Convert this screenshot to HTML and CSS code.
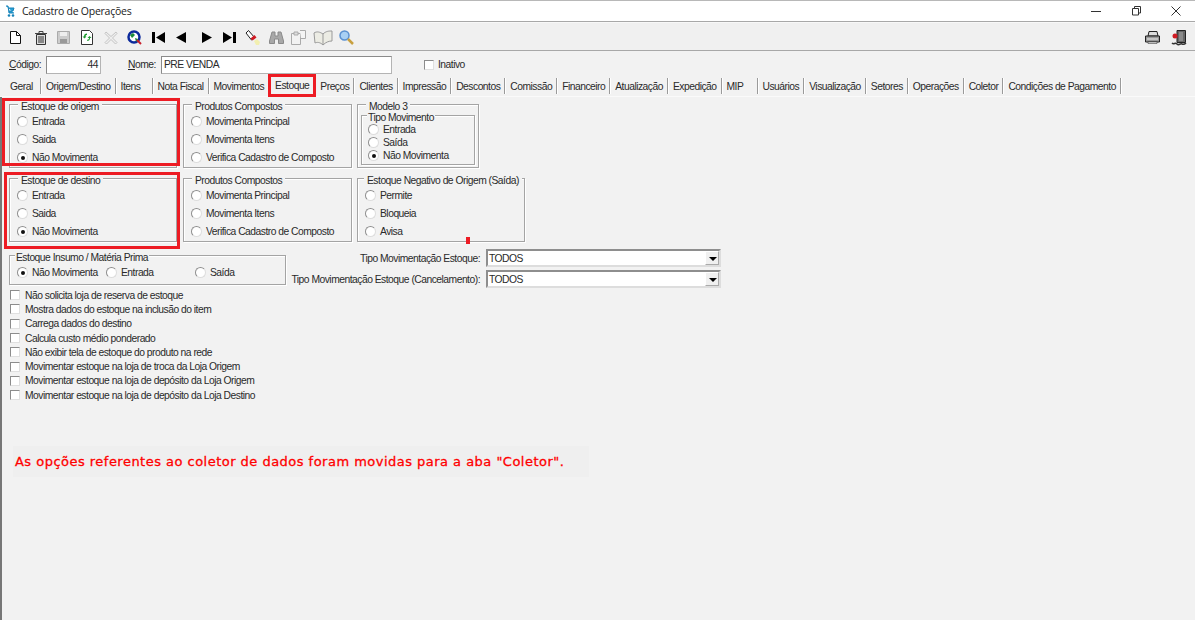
FILE: index.html
```html
<!DOCTYPE html>
<html lang="pt">
<head>
<meta charset="utf-8">
<title>Cadastro de Operações</title>
<link rel="stylesheet" href="styles.css">
</head>
<body>
<div class="window">
  <header class="titlebar">
    <svg class="app-icon" width="10" height="13" viewBox="0 0 10 13"><path d="M1 1h2l1 7h5M3 3h6l-1 3H4" fill="#29a3d8" stroke="#1682b8"/><circle cx="4" cy="10.500" r="1.300" fill="#1682b8"/><circle cx="8" cy="10.500" r="1.300" fill="#1682b8"/></svg>
    <span class="title-text">Cadastro de Operações</span>
    <div class="winctl">
      <svg width="12" height="12" viewBox="0 0 12 12"><path d="M1 6.500h10" stroke="#333"/></svg>
      <svg width="12" height="12" viewBox="0 0 12 12"><path d="M2.500 3.500h6v6.500h-6zM4.500 3.500v-2h6v6.500h-2" fill="none" stroke="#333"/></svg>
      <svg width="12" height="12" viewBox="0 0 12 12"><path d="M1.500 1.500l9 9M10.500 1.500l-9 9" stroke="#333"/></svg>
    </div>
  </header>

  <div class="toolbar">
    <svg class="ti i-new" width="11" height="13" viewBox="0 0 11 13"><path d="M.5.500h6l4 4v8H.500z" fill="#fff" stroke="#111"/><path d="M6.500.5v4h4" fill="none" stroke="#111"/></svg>
    <svg class="ti i-del" width="14" height="15" viewBox="0 0 14 15"><path d="M1 3.500h12M5 3V1.500h4V3" fill="none" stroke="#444"/><path d="M2.500 4.500h9v10h-9z" fill="#ddd" stroke="#333"/><path d="M5 6v7M7 6v7M9 6v7" stroke="#333"/></svg>
    <svg class="ti i-save" width="13" height="13" viewBox="0 0 13 13"><path d="M.5.500h12v12H.500z" fill="#ccc" stroke="#aaa"/><path d="M3 1h7v4H3z" fill="#eee"/><path d="M3 8h7v4H3z" fill="#999"/></svg>
    <svg class="ti i-ref" width="12" height="15" viewBox="0 0 12 15"><path d="M.5.500h8l3 3v11H.500z" fill="#fff" stroke="#333"/><path d="M6 3.500c-2 0-3 1-3 3l-1.500 0 2 2 2-2H4.500c0-1 .5-1.500 1.500-1.500zM6 11c2 0 3-1 3-3h1.500l-2-2-2 2H8c0 1-.5 1.500-1.500 1.500z" fill="#1a9a2c"/></svg>
    <svg class="ti i-x" width="14" height="14" viewBox="0 0 14 14"><path d="M2 1l5 4.500L12 1l1 1.500L8.500 7l4.500 4.500-1.500 1.500L7 8.500 2.500 13 1 11.500 5.500 7 1 2.500z" fill="#eee" stroke="#c4c4c4"/></svg>
    <svg class="ti i-globe" width="15" height="15" viewBox="0 0 15 15"><circle cx="7" cy="7" r="5.500" fill="#fff" stroke="#0c2a9c" stroke-width="2.500"/><path d="M3 5l3-2 2 2-3 3zM8 8l3 1-2 3z" fill="#1c8a3a"/><path d="M10 10l4 4" stroke="#c8202c" stroke-width="2"/></svg>
    <svg class="ti i-first" width="13" height="11" viewBox="0 0 13 11"><path d="M0 0h3v11H0zM13 0v11L4 5.500z" fill="#000"/></svg>
    <svg class="ti i-prev" width="10" height="11" viewBox="0 0 10 11"><path d="M10 0v11L0 5.500z" fill="#000"/></svg>
    <svg class="ti i-next" width="10" height="11" viewBox="0 0 10 11"><path d="M0 0v11l10-5.500z" fill="#000"/></svg>
    <svg class="ti i-last" width="13" height="11" viewBox="0 0 13 11"><path d="M0 0v11l9-5.500zM10 0h3v11h-3z" fill="#000"/></svg>
    <svg class="ti i-flash" width="16" height="16" viewBox="0 0 16 16"><path d="M1 3l2.500-2.500 6 7-3 2.500z" fill="#fff" stroke="#222"/><path d="M5.500 8.500l4-3.500 2 2.500-4 3z" fill="#d01c24"/><path d="M9 11l3-2 3 3-1 3-3 0z" fill="#f2efb0"/></svg>
    <svg class="ti i-bino" width="15" height="13" viewBox="0 0 15 13"><path d="M3 1h3v4h3V1h3l2.500 9v2.500H9.500V8H5.500v4.500H.500V10z" fill="#a8a8a8" stroke="#8a8a8a"/></svg>
    <svg class="ti i-copy" width="16" height="15" viewBox="0 0 16 15"><path d="M.5 3.500h9v11h-9z" fill="#f2f2f2" stroke="#aaa"/><path d="M9 .5h5.500v8H10" fill="#f4f4f4" stroke="#aaa"/><path d="M3 2h4v3H3z" fill="#ddd" stroke="#aaa"/></svg>
    <svg class="ti i-book" width="20" height="16" viewBox="0 0 20 16"><path d="M1 3c3-2 6-1 9 1 3-3 6-3 9-3v10c-3 0-6 1-9 4-3-3-6-3-8-2z" fill="#ecece4" stroke="#999"/><path d="M10 4v11" stroke="#999"/></svg>
    <svg class="ti i-find" width="15" height="15" viewBox="0 0 15 15"><circle cx="5.500" cy="5.500" r="4.500" fill="#a8d0f4" stroke="#5a90d0" stroke-width="1.500"/><path d="M9 9l5 5" stroke="#c8a040" stroke-width="2.500"/></svg>
    <svg class="ti i-print" width="15" height="13" viewBox="0 0 15 13"><path d="M4 .5h8l1 4.500H3z" fill="#ddd" stroke="#222"/><path d="M.5 5h14v6H.500z" fill="#999" stroke="#222"/><path d="M2 8h11" stroke="#eee"/><path d="M3 11h9v1.500H3z" fill="#eee" stroke="#222" stroke-width=".5"/></svg>
    <svg class="ti i-door" width="16" height="16" viewBox="0 0 16 16"><path d="M6 .5h8.500v12H6z" fill="#666" stroke="#222"/><path d="M8 2h4v9H8z" fill="#8a8a8a"/><circle cx="4" cy="6" r="2.500" fill="#d01c24"/><path d="M1 13c2 2 3-1 5 1s3-1 5 0 3 0 4-1" fill="none" stroke="#333" stroke-width="1.500"/></svg>
  </div>

  <div class="idrow">
    <span class="idlabel"><u>C</u>ódigo:</span>
    <span class="field code">44</span>
    <span class="idlabel name-label"><u>N</u>ome:</span>
    <span class="field name">PRE VENDA</span>
    <span class="check inativo"><i class="cb"></i>Inativo</span>
  </div>

  <nav class="tabs">
    <span class="tab t-geral">Geral</span>
    <span class="tab">Origem/Destino</span>
    <span class="tab t-itens">Itens</span>
    <span class="tab">Nota Fiscal</span>
    <span class="tab">Movimentos</span>
    <span class="tab active">Estoque</span>
    <span class="tab">Preços</span>
    <span class="tab">Clientes</span>
    <span class="tab">Impressão</span>
    <span class="tab">Descontos</span>
    <span class="tab">Comissão</span>
    <span class="tab">Financeiro</span>
    <span class="tab">Atualização</span>
    <span class="tab">Expedição</span>
    <span class="tab t-mip">MIP</span>
    <span class="tab">Usuários</span>
    <span class="tab">Visualização</span>
    <span class="tab">Setores</span>
    <span class="tab">Operações</span>
    <span class="tab">Coletor</span>
    <span class="tab">Condições de Pagamento</span>
  </nav>

  <main class="content">
    <div class="grouprow">
      <fieldset class="group g-stock">
        <legend>Estoque de origem</legend>
        <label class="radio"><i class="rd"></i>Entrada</label>
        <label class="radio"><i class="rd"></i>Saida</label>
        <label class="radio"><i class="rd on"></i>Não Movimenta</label>
      </fieldset>
      <fieldset class="group g-comp">
        <legend>Produtos Compostos</legend>
        <label class="radio"><i class="rd"></i>Movimenta Principal</label>
        <label class="radio"><i class="rd"></i>Movimenta Itens</label>
        <label class="radio"><i class="rd"></i>Verifica Cadastro de Composto</label>
      </fieldset>
      <fieldset class="group g-model">
        <legend>Modelo 3</legend>
        <fieldset class="group g-inner">
          <legend>Tipo Movimento</legend>
          <label class="radio tight"><i class="rd"></i>Entrada</label>
          <label class="radio tight"><i class="rd"></i>Saída</label>
          <label class="radio tight"><i class="rd on"></i>Não Movimenta</label>
        </fieldset>
      </fieldset>
    </div>

    <div class="grouprow second">
      <fieldset class="group g-stock">
        <legend>Estoque de destino</legend>
        <label class="radio"><i class="rd"></i>Entrada</label>
        <label class="radio"><i class="rd"></i>Saida</label>
        <label class="radio"><i class="rd on"></i>Não Movimenta</label>
      </fieldset>
      <fieldset class="group g-comp">
        <legend>Produtos Compostos</legend>
        <label class="radio"><i class="rd"></i>Movimenta Principal</label>
        <label class="radio"><i class="rd"></i>Movimenta Itens</label>
        <label class="radio"><i class="rd"></i>Verifica Cadastro de Composto</label>
      </fieldset>
      <fieldset class="group g-neg">
        <legend>Estoque Negativo de Origem (Saída)</legend>
        <label class="radio"><i class="rd"></i>Permite</label>
        <label class="radio"><i class="rd"></i>Bloqueia</label>
        <label class="radio"><i class="rd"></i>Avisa</label>
      </fieldset>
    </div>

    <div class="thirdrow">
      <fieldset class="group g-insumo">
        <legend>Estoque Insumo / Matéria Prima</legend>
        <label class="radio r1"><i class="rd on"></i>Não Movimenta</label>
        <label class="radio r2"><i class="rd"></i>Entrada</label>
        <label class="radio"><i class="rd"></i>Saída</label>
      </fieldset>
      <div class="selects">
        <div class="selrow"><span class="sellabel">Tipo Movimentação Estoque:</span><span class="combo">TODOS<i class="arrow"></i></span></div>
        <div class="selrow"><span class="sellabel">Tipo Movimentação Estoque (Cancelamento):</span><span class="combo">TODOS<i class="arrow"></i></span></div>
      </div>
    </div>

    <div class="checks">
      <span class="check"><i class="cb"></i>Não solicita loja de reserva de estoque</span>
      <span class="check"><i class="cb"></i>Mostra dados do estoque na inclusão do item</span>
      <span class="check"><i class="cb"></i>Carrega dados do destino</span>
      <span class="check"><i class="cb"></i>Calcula custo médio ponderado</span>
      <span class="check"><i class="cb"></i>Não exibir tela de estoque do produto na rede</span>
      <span class="check"><i class="cb"></i>Movimentar estoque na loja de troca da Loja Origem</span>
      <span class="check"><i class="cb"></i>Movimentar estoque na loja de depósito da Loja Origem</span>
      <span class="check"><i class="cb"></i>Movimentar estoque na loja de depósito da Loja Destino</span>
    </div>

    <p class="notice">As opções referentes ao coletor de dados foram movidas para a aba "Coletor".</p>

    <i class="mark m-tab"></i>
    <i class="mark m-orig"></i>
    <i class="mark m-dest"></i>
    <i class="tick"></i>
  </main>
</div>
</body>
</html>
```

FILE: styles.css
```css
* { box-sizing: border-box; }
html, body { margin: 0; height: 100%; }
body {
  background: #f2f2f2;
  font-family: "Liberation Sans", Arial, sans-serif;
  font-size: 10.300px;
  letter-spacing: -0.5px;
  color: #2a2a2a;
  overflow: hidden;
}
.window { height: 620px; display: flex; flex-direction: column; border-top: 1px solid #b8b8b8; }

.titlebar { height: 21px; background: #fff; display: flex; align-items: center; padding-left: 5px; border-bottom: 1px solid #a8a8a8; flex: none; }
.app-icon { flex: none; }
.title-text { font-family: "Open Sans", sans-serif; font-size: 10.500px; letter-spacing: -0.25px; margin-left: 7px; color: #222; }
.winctl { margin-left: auto; display: flex; gap: 28px; padding-right: 13px; align-items: center; }

.toolbar { height: 29px; flex: none; display: flex; align-items: center; border-bottom: 1px solid #a8a8a8; border-top: 1px solid #f8f8f8; background: #f0f0f0; padding: 2px 0 0 10px; }
.ti { flex: none; }
.i-del { margin-left: 13px; }
.i-save { margin-left: 9px; }
.i-ref { margin-left: 11px; }
.i-x { margin-left: 11px; }
.i-globe { margin-left: 9px; }
.i-first { margin-left: 10px; }
.i-prev { margin-left: 11px; }
.i-next { margin-left: 16px; }
.i-last { margin-left: 11px; }
.i-flash { margin-left: 9px; }
.i-bino { margin-left: 8px; }
.i-copy { margin-left: 7px; }
.i-book { margin-left: 6px; }
.i-find { margin-left: 6px; }
.i-print { margin-left: auto; }
.i-door { margin-left: 11px; margin-right: 8px; }

.idrow { height: 25px; flex: none; display: flex; align-items: center; padding: 2px 0 0 9px; }
.idlabel { width: 37px; }
.field { height: 18px; background: #fff; border: 1px solid #b4b4b4; border-top-color: #8a8a8a; border-left-color: #8a8a8a; display: flex; align-items: center; padding: 0 2px; }
.code { width: 55px; justify-content: flex-end; padding-right: 2px; }
.name-label { margin-left: 27px; width: 33px; }
.name { width: 231px; }
.check { display: flex; align-items: center; }
.cb { width: 10px; height: 10px; flex: none; background: #fff; border: 1px solid #8c8c8c; border-right-color: #e0e0e0; border-bottom-color: #e0e0e0; margin-right: 5px; }
.inativo { margin-left: 32px; }
.inativo .cb { margin-right: 4px; }

.tabs { height: 21px; flex: none; display: flex; align-items: flex-end; padding: 0 0 2px 5px; border-bottom: 1px solid #fafafa; }
.tab { height: 16px; padding: 0 4px 0 5px; display: flex; align-items: center; border-right: 1px solid #9a9a9a; box-shadow: 1px 0 0 #fff; white-space: nowrap; flex: none; }
.t-geral { width: 36px; }
.t-itens { width: 37px; }
.t-mip { width: 36px; }
.tab.active { align-self: flex-start; height: 19px; padding: 0 5px 1px 6px; margin-right: 1px; border-right: 0; box-shadow: none; }

.content { position: relative; flex: 1; padding: 7px 0 0 7px; border-left: 2px solid #777; }
.grouprow { display: flex; height: 64px; }
.grouprow.second { margin-top: 10px; }
.group { margin: 0; padding: 0; min-width: 0; border: 1px solid #a4a4a4; box-shadow: inset 1px 1px 0 #fff, 1px 1px 0 #fff; position: relative; }
.group legend { position: absolute; top: -3px; left: 8px; padding: 0 3px; line-height: 10px; height: 10px; background: #f2f2f2; white-space: nowrap; }
.g-stock { width: 168px; margin-right: 6px; padding: 8px 0 0 7px; }
.g-comp { width: 169px; margin-right: 5px; padding: 8px 0 0 7px; }
.g-model { width: 122px; padding: 10px 3px 3px 3px; }
.g-inner { height: 50px; padding: 7px 0 0 6px; }
.group.g-inner legend { left: 5px; padding: 0 1px; }
.g-neg { width: 168px; padding: 8px 0 0 7px; }
.group.g-neg legend { left: 6px; }

.radio { display: flex; align-items: center; height: 17.700px; white-space: nowrap; }
.radio.tight { height: 13px; }
.rd { width: 11px; height: 11px; flex: none; border-radius: 50%; border: 1px solid #8e8e8e; border-right-color: #ddd; border-bottom-color: #ddd; background: #fff; margin-right: 4px; position: relative; }
.rd.on::after { content: ""; position: absolute; left: 3px; top: 3px; width: 4px; height: 4px; border-radius: 50%; background: #111; }

.thirdrow { display: flex; align-items: flex-start; margin-top: 7px; }
.g-insumo { width: 277px; height: 30px; margin-top: 6px; display: flex; padding: 4px 0 0 7px; align-items: center; }
.group.g-insumo legend { left: 5px; padding: 0 1px; }
.r1 { width: 89px; }
.r2 { width: 89px; }
.selects { display: flex; flex-direction: column; gap: 3px; }
.selrow { display: flex; align-items: center; height: 18px; width: 435px; justify-content: flex-end; }
.sellabel { margin-right: 6px; white-space: nowrap; }
.combo { width: 235px; height: 18px; background: #fff; border: 2px solid #8e8e8e; border-right-color: #ddd; border-bottom-color: #ddd; display: flex; align-items: center; padding-left: 1px; position: relative; }
.arrow { position: absolute; right: 0; top: 0; bottom: 0; width: 14px; background: #f0f0f0; border: 1px solid #aaa; border-left-color: #fff; border-top-color: #fff; }
.arrow::after { content: ""; position: absolute; left: 3px; top: 5px; border: 4px solid transparent; border-top: 4px solid #000; border-bottom: 0; }

.checks { display: flex; flex-direction: column; margin-top: 0; }
.checks .check { height: 14.300px; }
.checks .cb { margin-left: 1px; margin-right: 5px; }

.notice { margin: 44px 0 0 4px; width: 576px; height: 31px; background: #efefef; color: #f00; font-family: "DejaVu Sans", sans-serif; font-size: 13px; letter-spacing: 0.48px; display: flex; align-items: center; padding-left: 2px; -webkit-text-stroke: 0.3px #f00; }

.mark { position: absolute; border: 3px solid #ed1c24; display: block; }
.m-orig { left: 0; top: 1px; width: 178px; height: 68px; }
.m-dest { left: 2px; top: 75px; width: 176px; height: 77px; }
.m-tab { left: 266px; top: -23px; width: 48px; height: 23px; }
.tick { position: absolute; left: 464px; top: 140px; width: 4px; height: 7px; background: #ed1c24; }
```
